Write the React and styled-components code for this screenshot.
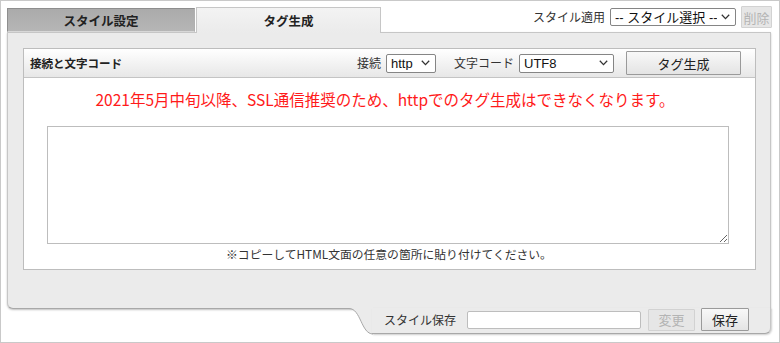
import React, { useState } from "react";
import styled, { createGlobalStyle } from "styled-components";

const GlobalStyle = createGlobalStyle`
  html, body {
    margin: 0;
    padding: 0;
    background: #fff;
  }
  body {
    font-family: "Noto Sans CJK JP", sans-serif;
    color: #222;
  }
  * { box-sizing: border-box; }
`;

const Frame = styled.div`
  width: 780px;
  height: 343px;
  border: 1px solid #c9c9c9;
  padding: 0 8px 0 6px;
  display: flex;
  flex-direction: column;
  background: #fff;
`;

const TopRow = styled.div`
  display: flex;
  align-items: flex-end;
  height: 31px;
`;

const TabList = styled.div`
  display: flex;
  align-items: flex-end;
  gap: 1px;
`;

const Tab = styled.div`
  width: ${(p) => p.$w}px;
  height: ${(p) => (p.$active ? 26 : 24)}px;
  display: flex;
  align-items: center;
  justify-content: center;
  font-size: 12.5px;
  font-weight: bold;
  color: #222;
  position: relative;
  z-index: ${(p) => (p.$active ? 1 : 0)};
  margin-bottom: ${(p) => (p.$active ? -1 : 0)}px;
  padding-bottom: ${(p) => (p.$active ? 1 : 0)}px;
  background: ${(p) =>
    p.$active
      ? "linear-gradient(#f3f3f3, #ebebeb)"
      : "linear-gradient(#ababab, #b6b6b6)"};
  border: 1px solid ${(p) => (p.$active ? "#c6c6c6" : "#8e8e8e")};
  border-bottom: ${(p) => (p.$active ? "none" : "1px solid #d8d8d8")};
  border-right-color: ${(p) => (p.$active ? "#c6c6c6" : "#b0b0b0")};
`;

const Tools = styled.div`
  margin-left: auto;
  align-self: flex-start;
  display: flex;
  align-items: center;
  gap: 5px;
  padding-top: 5px;
  margin-right: -1px;
`;

const Label = styled.span`
  font-size: 12px;
  color: #333;
  white-space: nowrap;
  line-height: 1;
`;

const SelectWrap = styled.div`
  position: relative;
  width: ${(p) => p.$w}px;
  height: ${(p) => p.$h}px;
`;

const NativeSelect = styled.select`
  display: block;
  appearance: none;
  width: 100%;
  height: 100%;
  border: 1px solid #858585;
  border-radius: 2px;
  background: #fff;
  font-family: "Liberation Sans", "Noto Sans CJK JP", sans-serif;
  font-size: 13px;
  line-height: 1;
  color: #111;
  padding: 0 18px 0 4px;
  margin: 0;
  outline: none;
`;

const Chevron = styled.svg`
  position: absolute;
  right: 6px;
  top: 50%;
  margin-top: -3px;
  pointer-events: none;
`;

function Select({ w, h, value, options }) {
  const [v, setV] = useState(value);
  return (
    <SelectWrap $w={w} $h={h}>
      <NativeSelect value={v} onChange={(e) => setV(e.target.value)}>
        {options.map((o) => (
          <option key={o}>{o}</option>
        ))}
      </NativeSelect>
      <Chevron width="9" height="6" viewBox="0 0 9 6">
        <polyline points="0.8,0.8 4.5,4.6 8.2,0.8" fill="none" stroke="#333" strokeWidth="1.3" />
      </Chevron>
    </SelectWrap>
  );
}

const Button = styled.button`
  height: ${(p) => p.$h || 24}px;
  width: ${(p) => p.$w}px;
  padding: 0;
  font-family: "Noto Sans CJK JP", sans-serif;
  font-size: 13px;
  line-height: 1;
  color: ${(p) => (p.disabled ? "#b4b4b4" : "#222")};
  background: ${(p) =>
    p.disabled ? "#e6e6e6" : "linear-gradient(#f8f8f8, #e4e4e4)"};
  border: 1px solid ${(p) => (p.disabled ? "#d2d2d2" : "#9a9a9a")};
  border-radius: 1px;
`;

const Panel = styled.div`
  background: #ebebeb;
  border: 1px solid #c6c6c6;
  border-bottom: 1px solid #a8a8a8;
  border-radius: 0 0 0 6px;
  box-shadow: 0 1px 2px rgba(0, 0, 0, 0.25);
  padding: 15px 14px 37px 15px;
  height: 277px;
`;

const Box = styled.div`
  background: #fff;
  border: 1px solid #bdbdbd;
  height: 222px;
  display: flex;
  flex-direction: column;
`;

const BoxHeader = styled.div`
  height: 29px;
  flex: none;
  display: flex;
  align-items: center;
  padding: 0 14px 0 6px;
  background: linear-gradient(#ffffff, #e7e7e7);
  border-bottom: 1px solid #c4c4c4;
`;

const BoxTitle = styled.span`
  font-size: 11.5px;
  font-weight: bold;
  color: #222;
`;

const HeaderControls = styled.div`
  margin-left: auto;
  display: flex;
  align-items: center;
`;

const Field = styled.div`
  display: flex;
  align-items: center;
  gap: 5px;
  margin-right: ${(p) => p.$gap}px;
`;

const Notice = styled.p`
  margin: 11px 0 0;
  text-align: center;
  color: #ff1a1a;
  font-size: 15.5px;
  line-height: 20px;
  padding-right: 9px;
`;

const Output = styled.textarea`
  display: block;
  margin: 17px 0 0 23px;
  width: 682px;
  height: 118px;
  border: 1px solid #bdbdbd;
  border-radius: 0;
  resize: both;
  font-family: "Liberation Mono", monospace;
  font-size: 12px;
  outline: none;
  padding: 2px;
`;

const Hint = styled.p`
  margin: 2px 0 0;
  text-align: center;
  font-size: 11.8px;
  line-height: 16px;
  color: #333;
  padding-right: 1px;
`;

const BottomRow = styled.div`
  display: flex;
  justify-content: flex-end;
  margin-top: -1px;
  position: relative;
  z-index: 2;
`;

const Curve = styled.svg`
  display: block;
  flex: none;
  margin-right: -1px;
`;

const FooterTab = styled.div`
  width: 399px;
  height: 26px;
  background: #ebebeb;
  border-right: 1px solid #c6c6c6;
  border-bottom: 1px solid #a8a8a8;
  border-radius: 0 0 6px 0;
  box-shadow: 1px 1px 2px rgba(0, 0, 0, 0.2);
  display: flex;
  align-items: center;
  justify-content: flex-end;
  padding: 0 21px 2px 0;
  gap: 6px;
`;

const NameInput = styled.input`
  width: 174px;
  height: 18px;
  border: 1px solid #bdbdbd;
  border-radius: 2px;
  margin: 0 1px 0 5px;
  outline: none;
  font-size: 12px;
`;

export default function App() {
  return (
    <>
      <GlobalStyle />
      <Frame>
        <TopRow>
          <TabList>
            <Tab $w={188}>スタイル設定</Tab>
            <Tab $w={185} $active>
              タグ生成
            </Tab>
          </TabList>
          <Tools>
            <Label>スタイル適用</Label>
            <Select w={126} h={18} value="-- スタイル選択 --" options={["-- スタイル選択 --"]} />
            <Button $w={31} $h={22} disabled>
              削除
            </Button>
          </Tools>
        </TopRow>
        <Panel>
          <Box>
            <BoxHeader>
              <BoxTitle>接続と文字コード</BoxTitle>
              <HeaderControls>
                <Field $gap={18}>
                  <Label>接続</Label>
                  <Select w={50} h={19} value="http" options={["http", "https"]} />
                </Field>
                <Field $gap={12}>
                  <Label>文字コード</Label>
                  <Select w={95} h={19} value="UTF8" options={["UTF8", "SJIS", "EUC"]} />
                </Field>
                <Button $w={115} $h={24}>
                  タグ生成
                </Button>
              </HeaderControls>
            </BoxHeader>
            <Notice>
              2021年5月中旬以降、SSL通信推奨のため、httpでのタグ生成はできなくなります。
            </Notice>
            <Output readOnly />
            <Hint>※コピーしてHTML文面の任意の箇所に貼り付けてください。</Hint>
          </Box>
        </Panel>
        <BottomRow>
          <Curve width="24" height="27" viewBox="0 0 24 27">
            <path d="M0 0.5 C12 0.5 12 26 24 26 L24 0 L0 0 Z" fill="#ebebeb" />
            <path d="M0 0.5 C12 0.5 12 26 24 26" fill="none" stroke="#a8a8a8" strokeWidth="1" />
          </Curve>
          <FooterTab>
            <Label>スタイル保存</Label>
            <NameInput />
            <Button $w={47} $h={22} disabled>
              変更
            </Button>
            <Button $w={48} $h={23}>
              保存
            </Button>
          </FooterTab>
        </BottomRow>
      </Frame>
    </>
  );
}
